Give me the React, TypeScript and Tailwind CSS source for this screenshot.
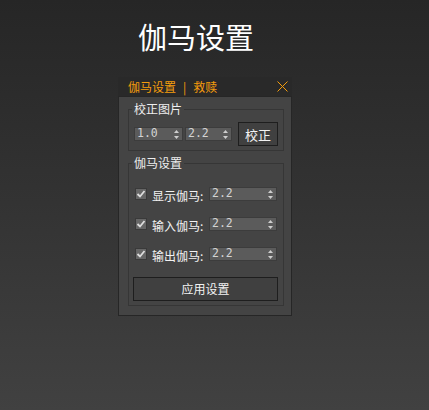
import { ReactNode } from "react";

function Arrows() {
  return (
    <svg width="5" height="9" viewBox="0 0 5 9" className="shrink-0">
      <path d="M2.5 0 L5 3 L0 3 Z" fill="#cfcfcf" />
      <path d="M2.5 9 L5 6 L0 6 Z" fill="#cfcfcf" />
    </svg>
  );
}

function Spin({ value, className }: { value: string; className: string }) {
  return (
    <div
      className={`flex h-[14px] items-center justify-between border border-[#3c3c3c] bg-[#5b5b5b] pl-[2px] pr-[3px] ${className}`}
    >
      <span className="font-['DejaVu_Sans_Mono',monospace] text-[11.5px] leading-none text-[#d4d4d4]">
        {value}
      </span>
      <Arrows />
    </div>
  );
}

function Check() {
  return (
    <div className="flex h-[12px] w-[12px] shrink-0 items-center justify-center border border-[#3a3a3a] bg-[#666666]">
      <svg width="10" height="10" viewBox="0 0 10 10">
        <path d="M1.5 5 L4 7.5 L8.5 2" stroke="#dedede" strokeWidth="1.8" fill="none" />
      </svg>
    </div>
  );
}

function Group({ title, className, children }: { title: string; className: string; children: ReactNode }) {
  return (
    <fieldset className={`ml-[9px] w-[156px] border border-[#363636] ${className}`}>
      <legend className="ml-[3px] px-[2px] text-[12px] leading-[14px] text-[#eeeeee]">{title}</legend>
      {children}
    </fieldset>
  );
}

function GammaRow({ label }: { label: string }) {
  return (
    <div className="flex h-[14px] items-center">
      <Check />
      <span className="ml-[5px] mt-[3px] text-[12px] leading-none text-[#f2f2f2]">{label}:</span>
      <Spin value="2.2" className="ml-auto w-[68px]" />
    </div>
  );
}

export default function App() {
  return (
    <div className="h-[410px] w-full bg-gradient-to-b from-[#262626] to-[#414141] font-['Noto_Sans_CJK_SC',sans-serif]">
      <h1 className="pl-[138px] pt-[21px] text-[29px] leading-[31px] text-white">伽马设置</h1>

      <div className="ml-[118px] mt-[25px] w-[174px]">
        <div className="flex h-[19px] items-center justify-between bg-[#292929] pl-[10px] pr-[4px]">
          <div className="flex items-center text-[12px] leading-none text-[#f59d0c]">
            <span>伽马设置</span>
            <span className="mx-[7px]">|</span>
            <span>救赎</span>
          </div>
          <svg width="11" height="11" viewBox="0 0 11 11">
            <path d="M0.5 0.5 L10.5 10.5 M10.5 0.5 L0.5 10.5" stroke="#f59d0c" strokeWidth="1" />
          </svg>
        </div>

        <div className="flex flex-col border border-[#262626] bg-[#444444] pb-[9px] pt-[5px]">
          <Group title="校正图片" className="pb-[4px] pt-[6px]">
            <div className="flex items-center pl-[5px]">
              <Spin value="1.0" className="w-[49px]" />
              <Spin value="2.2" className="ml-[2px] w-[47px]" />
              <button className="ml-[6px] h-[24px] w-[40px] border border-[#1e1e1e] bg-[#404040] text-[13px] leading-none text-[#f2f2f2]">
                校正
              </button>
            </div>
          </Group>

          <Group title="伽马设置" className="mt-[5px] pb-[4px] pt-[17px]">
            <div className="flex flex-col gap-[16px] pl-[6px] pr-[6px]">
              <GammaRow label="显示伽马" />
              <GammaRow label="输入伽马" />
              <GammaRow label="输出伽马" />
            </div>
            <button className="ml-[4px] mt-[16px] h-[24px] w-[145px] border border-[#1e1e1e] bg-[#404040] text-[12px] leading-none text-[#f2f2f2]">
              应用设置
            </button>
          </Group>
        </div>
      </div>
    </div>
  );
}
